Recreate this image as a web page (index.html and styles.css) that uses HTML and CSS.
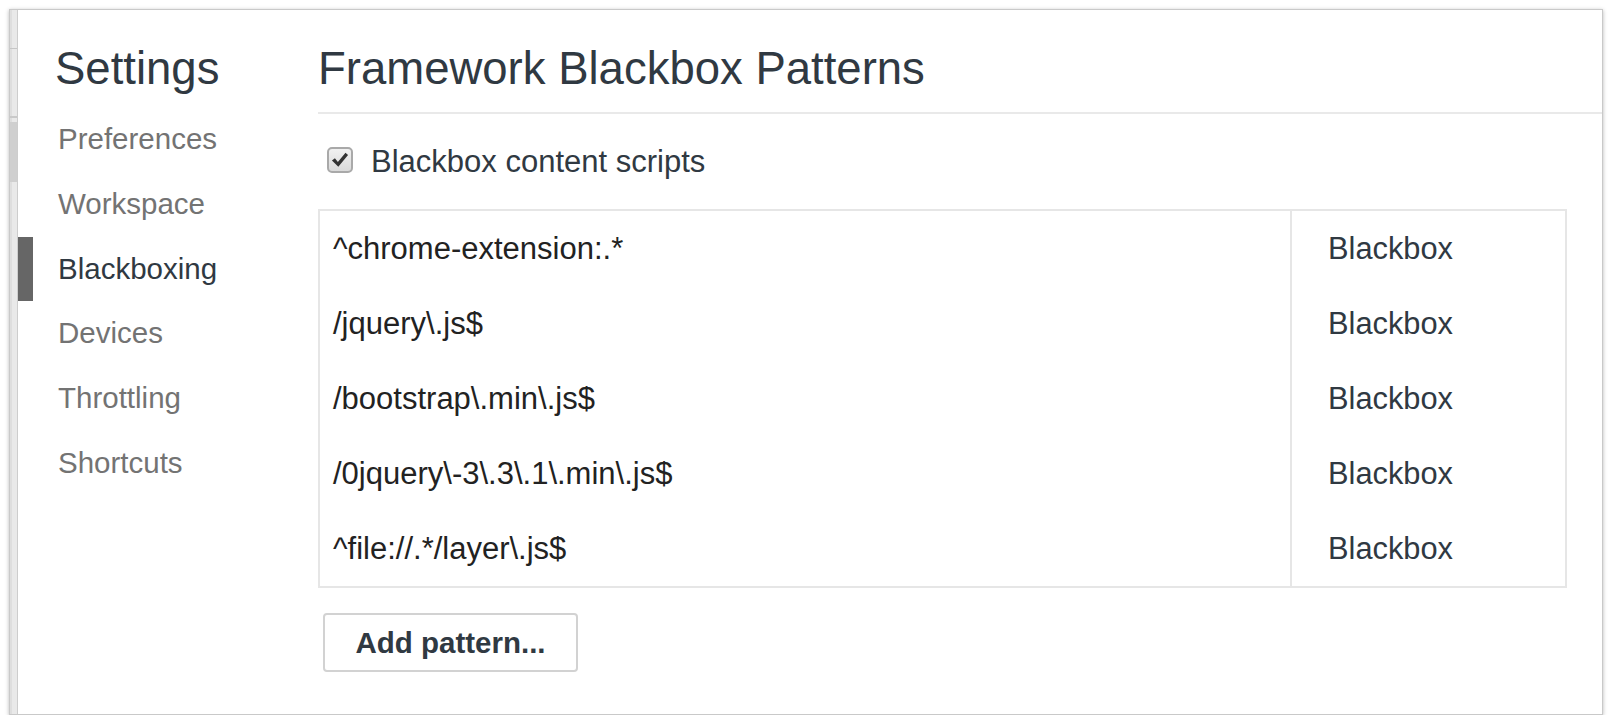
FILE: index.html
```html
<!DOCTYPE html>
<html lang="en">
<head>
<meta charset="utf-8">
<title>Settings - Blackboxing</title>
<link rel="stylesheet" href="styles.css">
</head>
<body>
<div class="window">
  <div class="strip">
    <div class="strip-seg seg-a"></div>
    <div class="strip-seg seg-b"></div>
    <div class="strip-seg seg-c"></div>
    <div class="strip-seg seg-d"></div>
    <div class="strip-seg seg-e"></div>
  </div>
  <div class="dialog">
    <aside class="sidebar">
      <h1 class="title">Settings</h1>
      <nav class="nav">
        <div class="nav-item">Preferences</div>
        <div class="nav-item">Workspace</div>
        <div class="nav-item active">Blackboxing</div>
        <div class="nav-item">Devices</div>
        <div class="nav-item">Throttling</div>
        <div class="nav-item">Shortcuts</div>
      </nav>
    </aside>
    <main class="content">
      <div class="header">
        <h2 class="heading">Framework Blackbox Patterns</h2>
      </div>
      <label class="check-row">
        <span class="checkbox">
          <svg viewBox="0 0 26 26" width="22" height="22" aria-hidden="true">
            <path d="M3.5 13.5 L7 11 L10.5 15.5 L19.5 4.5 L22.5 7 L11 21 Z" fill="#333"/>
          </svg>
        </span>
        <span class="check-label">Blackbox content scripts</span>
      </label>
      <div class="patterns">
        <div class="row"><div class="pattern">^chrome-extension:.*</div><div class="action">Blackbox</div></div>
        <div class="row"><div class="pattern">/jquery\.js$</div><div class="action">Blackbox</div></div>
        <div class="row"><div class="pattern">/bootstrap\.min\.js$</div><div class="action">Blackbox</div></div>
        <div class="row"><div class="pattern">/0jquery\-3\.3\.1\.min\.js$</div><div class="action">Blackbox</div></div>
        <div class="row"><div class="pattern">^file://.*/layer\.js$</div><div class="action">Blackbox</div></div>
      </div>
      <button class="add-btn" type="button">Add pattern...</button>
    </main>
  </div>
</div>
</body>
</html>
```

FILE: styles.css
```css
html, body {
  margin: 0;
  padding: 0;
  background: #ffffff;
}

body {
  padding: 9px 0 0 9px;
  font-family: "Liberation Sans", Arial, Helvetica, sans-serif;
  color: #303942;
}

.window {
  box-sizing: border-box;
  width: 1594px;
  height: 706px;
  border: 1px solid #c9c9c9;
  box-shadow: 0 1px 4px rgba(0, 0, 0, 0.28);
  display: flex;
  background: #ffffff;
}

.strip {
  width: 7px;
  border-right: 1px solid #cdcdcd;
  display: flex;
  flex-direction: column;
  background: #e9e9e9;
  box-shadow: inset 2px 0 0 #dedede;
}

.seg-a {
  height: 38px;
  border-bottom: 1px solid #c6c6c6;
}

.seg-b {
  height: 67px;
  border-bottom: 2px solid #c9c9c9;
}

.seg-c {
  height: 4px;
}

.seg-d {
  height: 60px;
  background: #cfcfcf;
}

.seg-e {
  flex: 1;
}

.dialog {
  flex: 1;
  display: flex;
  min-width: 0;
}

.sidebar {
  width: 300px;
  flex: none;
  padding-top: 36px;
}

.title {
  margin: 0 0 0 37px;
  font-size: 45.5px;
  line-height: 45px;
  font-weight: normal;
  color: #303942;
}

.nav {
  margin-top: 16px;
  display: flex;
  flex-direction: column;
}

.nav-item {
  height: 64.8px;
  line-height: 64.8px;
  padding-left: 40px;
  font-size: 29.5px;
  color: #737373;
  white-space: nowrap;
}

.nav-item.active {
  color: #303942;
  border-left: 15px solid #666666;
  padding-left: 25px;
}

.content {
  flex: 1;
  min-width: 0;
  padding-top: 36px;
}

.header {
  padding-bottom: 21px;
  border-bottom: 2px solid #e9e9e9;
}

.heading {
  margin: 0;
  font-size: 45.5px;
  line-height: 45px;
  font-weight: normal;
  color: #303942;
}

.check-row {
  display: flex;
  align-items: center;
  margin-top: 33px;
  height: 26px;
  padding-left: 9px;
}

.checkbox {
  box-sizing: border-box;
  width: 26px;
  height: 26px;
  border: 2px solid #a9a9a9;
  border-radius: 5px;
  background: linear-gradient(#f1f1f1, #dadada);
  display: flex;
  align-items: center;
  justify-content: center;
}

.check-label {
  margin-left: 18px;
  padding-top: 4px;
  font-size: 31px;
  color: #303942;
}

.patterns {
  margin-top: 36px;
  margin-right: 35px;
  border: 2px solid #e6e6e6;
}

.row {
  display: flex;
  height: 75px;
}

.pattern {
  flex: 1;
  padding-left: 13px;
  line-height: 75px;
  font-size: 31px;
  color: #222222;
  white-space: nowrap;
}

.action {
  width: 237px;
  flex: none;
  border-left: 2px solid #e6e6e6;
  padding-left: 36px;
  line-height: 75px;
  font-size: 30.8px;
  color: #303942;
}

.add-btn {
  display: block;
  box-sizing: border-box;
  margin: 25px 0 0 5px;
  width: 255px;
  height: 59px;
  border: 2px solid #d2d2d2;
  border-radius: 4px;
  background: #ffffff;
  font-family: "Liberation Sans", Arial, Helvetica, sans-serif;
  font-size: 29.5px;
  font-weight: bold;
  color: #303942;
  padding: 0;
}
```
